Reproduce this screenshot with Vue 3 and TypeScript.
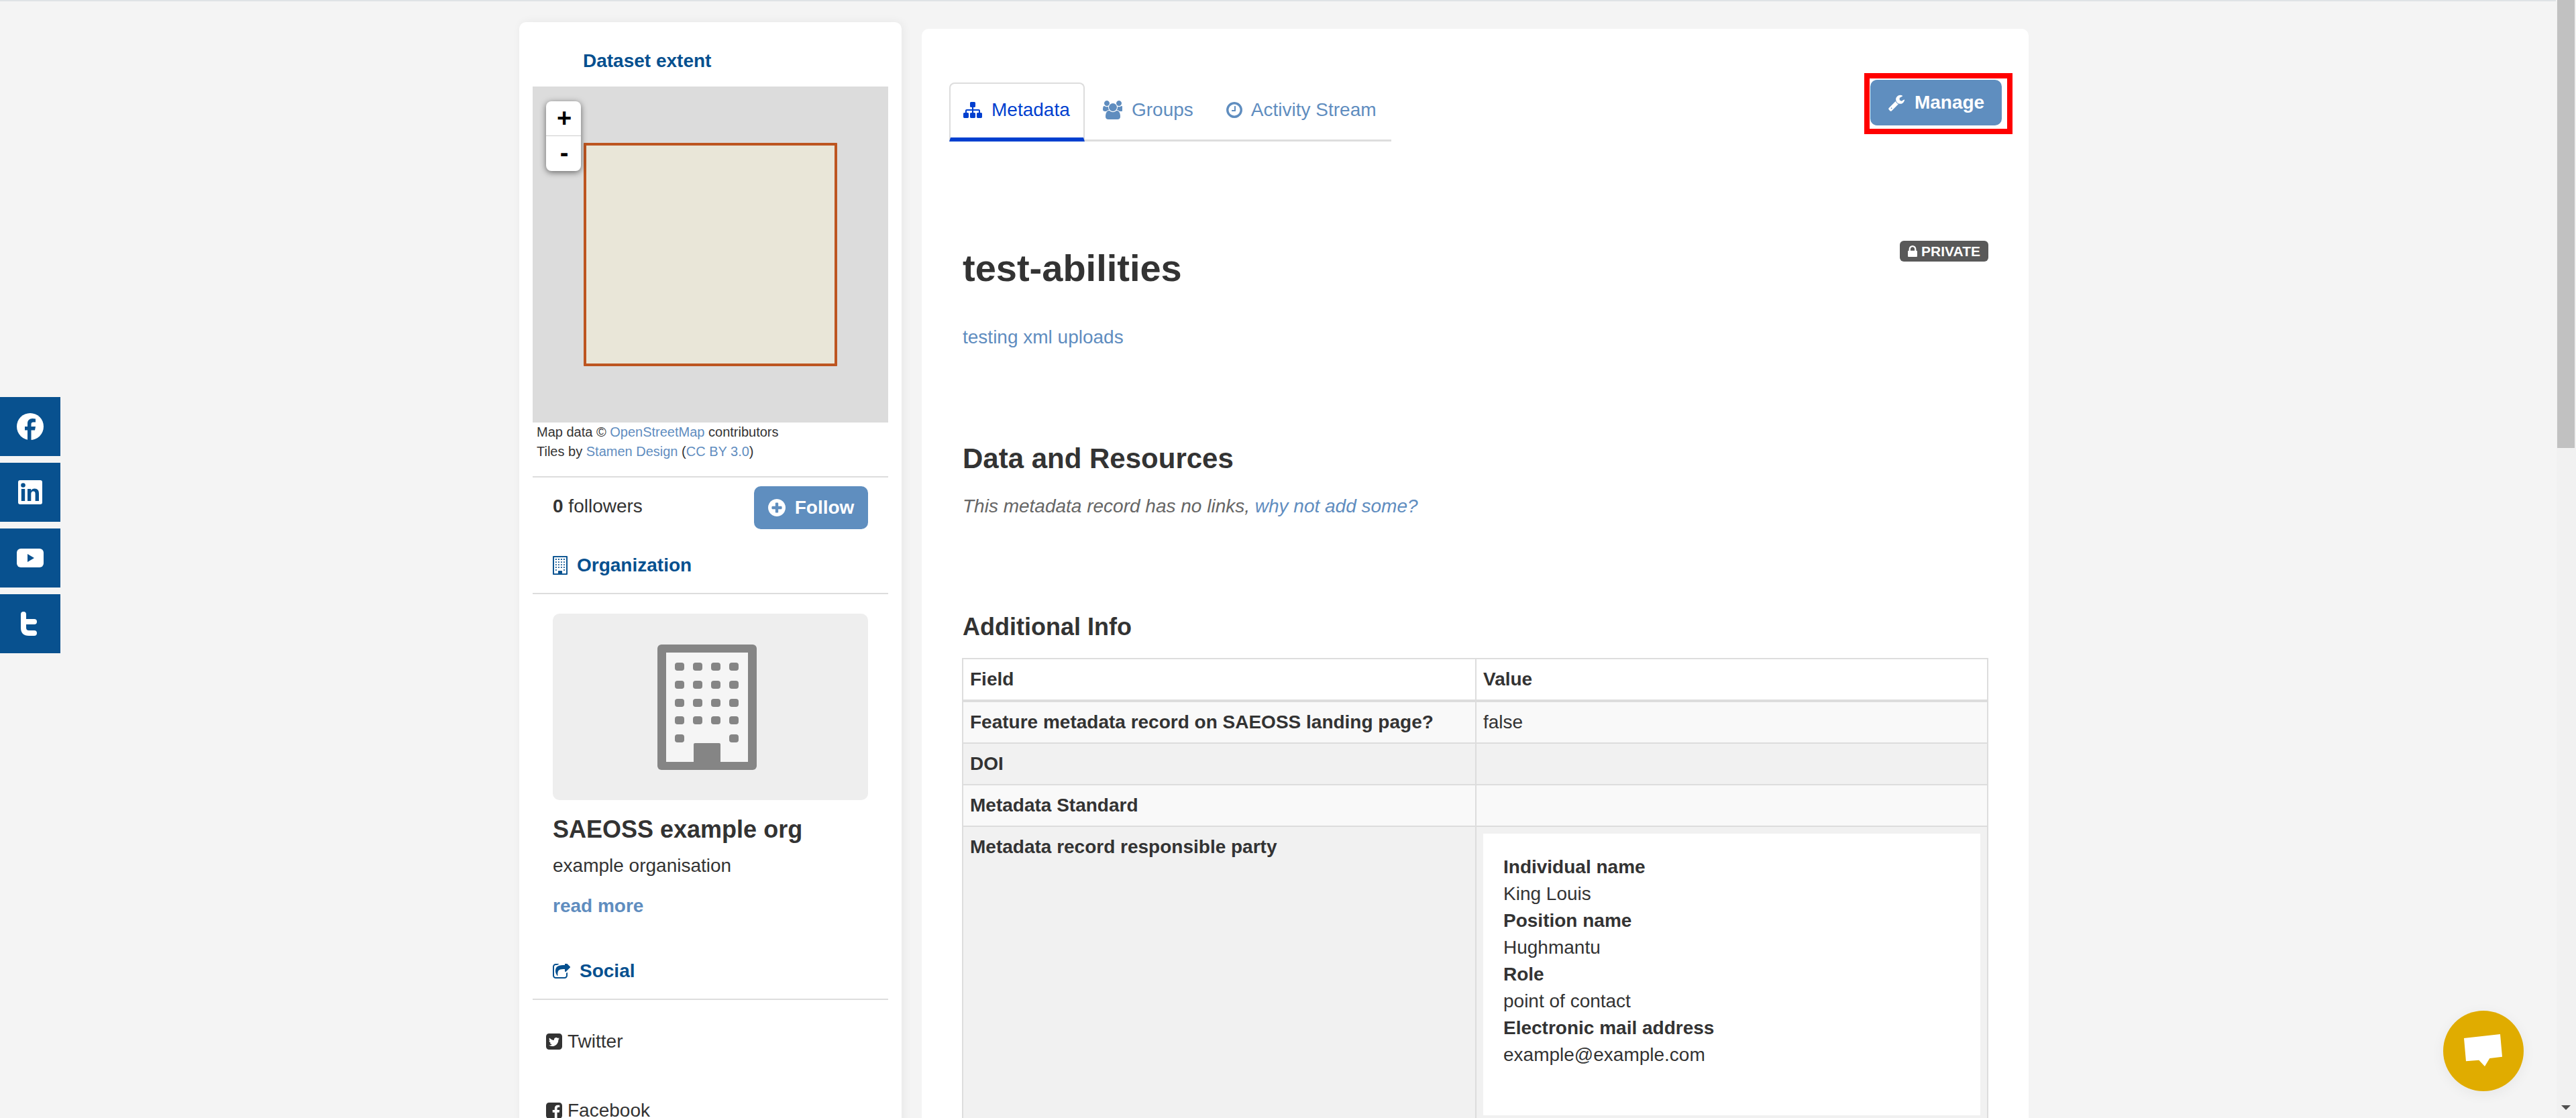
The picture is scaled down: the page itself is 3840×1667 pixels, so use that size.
<script setup lang="ts">
const ICONS: Record<string, { box: string; d: string }> = {
  sitemap: { box: '0 0 1792 1792', d: 'M1792 1248v320q0 40-28 68t-68 28h-320q-40 0-68-28t-28-68v-320q0-40 28-68t68-28h96v-192h-512v192h96q40 0 68 28t28 68v320q0 40-28 68t-68 28h-320q-40 0-68-28t-28-68v-320q0-40 28-68t68-28h96v-192h-512v192h96q40 0 68 28t28 68v320q0 40-28 68t-68 28h-320q-40 0-68-28t-28-68v-320q0-40 28-68t68-28h96v-192q0-52 38-90t90-38h512v-192h-96q-40 0-68-28t-28-68v-320q0-40 28-68t68-28h320q40 0 68 28t28 68v320q0 40-28 68t-68 28h-96v192h512q52 0 90 38t38 90v192h96q40 0 68 28t28 68z' },
  users: { box: '0 0 1920 1792', d: 'M657 896q-162 5-265 128h-134q-82 0-138-40.500t-56-118.500q0-353 124-353 6 0 43.500 21t97.500 42.500 119 21.500q67 0 133-23-5 37-5 66 0 139 81 256zm1071 637q0 120-73 189.500t-194 69.500h-874q-121 0-194-69.500t-73-189.500q0-53 3.500-103.500t14-109 26.500-108.500 43-97.500 62-81 85.500-53.500 111.500-20q10 0 43 21.500t73 48 107 48 135 21.500 135-21.500 107-48 73-48 43-21.500q61 0 111.500 20t85.500 53.500 62 81 43 97.500 26.500 108.500 14 109 3.500 103.500zm-1024-1277q0 106-75 181t-181 75-181-75-75-181 75-181 181-75 181 75 75 181zm704 384q0 159-112.500 271.500t-271.500 112.500-271.500-112.500-112.500-271.500 112.500-271.500 271.500-112.500 271.500 112.500 112.500 271.500zm576 225q0 78-56 118.500t-138 40.500h-134q-103-123-265-128 81-117 81-256 0-29-5-66 66 23 133 23 59 0 119-21.500t97.500-42.500 43.500-21q124 0 124 353zm-128-609q0 106-75 181t-181 75-181-75-75-181 75-181 181-75 181 75 75 181z' },
  clock: { box: '128 128 1536 1536', d: 'M1024 544v448q0 14-9 23t-23 9h-320q-14 0-23-9t-9-23v-64q0-14 9-23t23-9h224v-352q0-14 9-23t23-9h64q14 0 23 9t9 23zm416 352q0-148-73-273t-198-198-273-73-273 73-198 198-73 273 73 273 198 198 273 73 273-73 198-198 73-273zm224 0q0 209-103 385.500t-279.500 279.500-385.500 103-385.500-103-279.500-279.500-103-385.500 103-385.500 279.500-279.500 385.500-103 385.500 103 279.500 279.500 103 385.500z' },
  wrench: { box: '0 0 1792 1792', d: 'M448 1472q0-26-19-45t-45-19-45 19-19 45 19 45 45 19 45-19 19-45zm644-420l-682 682q-37 37-90 37-52 0-91-37l-106-108q-38-36-38-90 0-53 38-91l681-681q39 98 114.500 173.500t173.500 114.500zm634-435q0 39-23 106-47 134-164.500 217.500t-258.500 83.500q-185 0-316.500-131.500t-131.500-316.500 131.500-316.500 316.500-131.500q58 0 121.500 16.500t107.500 46.500q16 11 16 28t-16 28l-293 169v224l193 107q5-3 79-48.500t135.500-81 70.500-35.500q15 0 23.500 10t8.500 25z' },
  lock: { box: '320 128 1152 1408', d: 'M640 768h512v-192q0-106-75-181t-181-75-181 75-75 181v192zm832 96v576q0 40-28 68t-68 28h-960q-40 0-68-28t-28-68v-576q0-40 28-68t68-28h32v-192q0-184 132-316t316-132 316 132 132 316v192h32q40 0 68 28t28 68z' },
  plus: { box: '128 128 1536 1536', d: 'M1344 960v-128q0-26-19-45t-45-19h-256v-256q0-26-19-45t-45-19h-128q-26 0-45 19t-19 45v256h-256q-26 0-45 19t-19 45v128q0 26 19 45t45 19h256v256q0 26 19 45t45 19h128q26 0 45-19t19-45v-256h256q26 0 45-19t19-45zm320-64q0 209-103 385.500t-279.500 279.500-385.500 103-385.500-103-279.500-279.500-103-385.500 103-385.500 279.500-279.500 385.500-103 385.500 103 279.500 279.500 103 385.500z' },
  share: { box: '64 128 1664 1408', d: 'M1472 989v259q0 119-84.500 203.500t-203.500 84.500h-832q-119 0-203.500-84.500t-84.500-203.500v-832q0-119 84.500-203.500t203.500-84.500h255q13 0 22.500 9.500t9.500 22.500q0 27-26 32-77 26-133 60-10 4-16 4h-112q-66 0-113 47t-47 113v832q0 66 47 113t113 47h832q66 0 113-47t47-113v-214q0-19 18-29 28-13 54-37 16-16 35-8 21 9 21 29zm237-496l-384 384q-18 19-45 19-12 0-25-5-39-17-39-59v-192h-160q-323 0-438 131-119 137-74 473 3 23-20 34-8 2-12 2-16 0-26-13-10-14-21-31t-39.500-68.500-49.500-99.500-38.500-114-17.500-122q0-49 3.500-91t14-90 28-88 47-81.500 68.500-74 94.500-61.500 124.500-48.500 159.500-30.500 196.500-11h160v-192q0-42 39-59 13-5 25-5 26 0 45 19l384 384q19 19 19 45t-19 45z' },
  twitter: { box: '128 128 1536 1536', d: 'M1408 610q-56 25-121 34 68-40 93-117-65 38-134 51-61-66-153-66-87 0-148.500 61.500t-61.500 148.500q0 29 5 48-129-7-242-65t-192-155q-29 50-29 106 0 114 91 175-47-1-100-26v2q0 75 50 133.500t123 72.500q-29 8-51 8-13 0-39-4 21 63 74.500 104t121.500 42q-116 90-261 90-26 0-50-3 148 94 322 94 112 0 210-35.500t168-95 120.500-137 75-162 24.500-168.500q0-18-1-27 63-45 105-109zm256-194v960q0 119-84.500 203.500t-203.500 84.500h-960q-119 0-203.500-84.500t-84.500-203.500v-960q0-119 84.500-203.500t203.500-84.500h960q119 0 203.500 84.500t84.500 203.500z' },
  facebook: { box: '128 128 1536 1536', d: 'M1376 128q119 0 203.500 84.500t84.500 203.500v960q0 119-84.500 203.500t-203.500 84.500h-188v-595h199l30-232h-229v-148q0-56 23.500-84t91.500-28l122-1v-207q-63-9-178-9-136 0-217.500 80t-81.500 226v171h-200v232h200v595h-532q-119 0-203.500-84.500t-84.500-203.500v-960q0-119 84.500-203.500t203.500-84.500h960z' }
}

const tabs = [
  { label: 'Metadata', icon: 'sitemap', active: true },
  { label: 'Groups', icon: 'users', active: false },
  { label: 'Activity Stream', icon: 'clock', active: false }
]

const windows: { x: number; y: number }[] = []
for (const y of [33, 60, 87, 113, 140]) {
  for (const x of [33, 60, 87, 114]) {
    if (y === 140 && (x === 60 || x === 87)) continue
    windows.push({ x: x - 7, y: y - 6 })
  }
}

const party = [
  ['Individual name', 'King Louis'],
  ['Position name', 'Hughmantu'],
  ['Role', 'point of contact'],
  ['Electronic mail address', 'example@example.com']
]

const rows = [
  { field: 'Feature metadata record on SAEOSS landing page?', value: 'false' },
  { field: 'DOI', value: '' },
  { field: 'Metadata Standard', value: '' }
]
</script>

<template>
  <div class="page">
    <div class="topline"></div>

    <aside class="side">
      <h4 class="extent-title">Dataset extent</h4>
      <div class="map">
        <div class="extent"></div>
        <div class="zoom-ctl">
          <span class="zoom-btn">+</span>
          <span class="zoom-btn minus">-</span>
        </div>
      </div>
      <div class="attrib">
        <div>Map data © <a>OpenStreetMap</a> contributors</div>
        <div>Tiles by <a>Stamen Design</a> (<a>CC BY 3.0</a>)</div>
      </div>
      <hr class="rule first" />

      <div class="follow-row">
        <span class="followers"><b>0</b> followers</span>
        <button class="btn follow">
          <svg class="ico" :viewBox="ICONS.plus.box"><path :d="ICONS.plus.d" /></svg>
          Follow
        </button>
      </div>

      <h4 class="sec org">
        <svg class="org-ico" viewBox="0 0 148 187">
          <rect class="b-body" width="148" height="187" rx="6" />
          <rect class="b-inner" x="13" y="12" width="122" height="163" />
          <rect v-for="w in windows" :key="w.x + '-' + w.y" class="b-body" :x="w.x" :y="w.y" width="14" height="12" rx="4" />
          <rect class="b-body" x="54" y="147" width="40" height="30" rx="2" />
        </svg>
        Organization
      </h4>
      <hr class="rule" />

      <div class="org-box">
        <div class="logo">
          <svg class="logo-ico" viewBox="0 0 148 187">
            <rect class="b-body" width="148" height="187" rx="6" />
            <rect class="b-inner" x="13" y="12" width="122" height="163" />
            <rect v-for="w in windows" :key="w.x + '_' + w.y" class="b-body" :x="w.x" :y="w.y" width="14" height="12" rx="4" />
            <rect class="b-body" x="54" y="147" width="40" height="30" rx="2" />
          </svg>
        </div>
        <h3 class="org-name">SAEOSS example org</h3>
        <p class="org-desc">example organisation</p>
        <a class="more">read more</a>
      </div>

      <h4 class="sec social-head">
        <svg class="share-ico" :viewBox="ICONS.share.box"><path :d="ICONS.share.d" /></svg>
        Social
      </h4>
      <hr class="rule" />
      <div class="social-link tw">
        <svg class="sq" :viewBox="ICONS.twitter.box"><path :d="ICONS.twitter.d" /></svg>
        Twitter
      </div>
      <div class="social-link fb">
        <svg class="sq" :viewBox="ICONS.facebook.box"><path :d="ICONS.facebook.d" /></svg>
        Facebook
      </div>
    </aside>

    <main class="main">
      <div class="tab-row">
        <ul class="tabs">
          <li v-for="t in tabs" :key="t.label" class="tab" :class="{ active: t.active }">
            <svg class="tab-ico" :viewBox="ICONS[t.icon].box"><path :d="ICONS[t.icon].d" /></svg>
            {{ t.label }}
          </li>
        </ul>
        <div class="highlight">
          <button class="btn manage">
            <svg class="ico" :viewBox="ICONS.wrench.box"><path :d="ICONS.wrench.d" /></svg>
            Manage
          </button>
        </div>
      </div>

      <article class="article">
        <div class="title-row">
          <h1 class="title">test-abilities</h1>
          <span class="badge">
            <svg class="lock" :viewBox="ICONS.lock.box"><path :d="ICONS.lock.d" /></svg>
            PRIVATE
          </span>
        </div>
        <p class="notes"><a>testing xml uploads</a></p>

        <h3 class="h-res">Data and Resources</h3>
        <p class="empty">This metadata record has no links, <a>why not add some?</a></p>

        <h3 class="h-info">Additional Info</h3>
        <table class="info">
          <thead>
            <tr><th class="col-a">Field</th><th>Value</th></tr>
          </thead>
          <tbody>
            <tr v-for="r in rows" :key="r.field">
              <th>{{ r.field }}</th>
              <td>{{ r.value }}</td>
            </tr>
            <tr>
              <th>Metadata record responsible party</th>
              <td>
                <div class="party">
                  <template v-for="p in party" :key="p[0]">
                    <b>{{ p[0] }}</b>
                    <span>{{ p[1] }}</span>
                  </template>
                </div>
              </td>
            </tr>
          </tbody>
        </table>
      </article>
    </main>

    <nav class="share-bar">
      <div class="share-item">
        <svg width="40" height="40" viewBox="0 0 40 40">
          <circle cx="20" cy="20" r="20" fill="#fff" />
          <path d="M21.5 40V25.500H27L28 20H21.500V16.500C21.500 14.500 22.500 13.500 24.500 13.500H28V8.500C26.500 8.200 25 8 23.500 8C19 8 16 10.800 16 15.500V20H12V25.500H16V40z" fill="#08518f" />
        </svg>
      </div>
      <div class="share-item">
        <svg width="36" height="36" viewBox="0 0 36 36">
          <rect width="36" height="36" rx="3" fill="#fff" />
          <circle cx="7.500" cy="7.500" r="3.300" fill="#08518f" />
          <rect x="4.800" y="13" width="5.400" height="18" fill="#08518f" />
          <path d="M14 13h5.200v2.600c1-1.800 3-3 5.400-3 4.500 0 6.400 2.800 6.400 7.400V31h-5.400V20.500c0-2.600-.8-4-3-4-2.400 0-3.300 1.800-3.300 4V31H14z" fill="#08518f" />
        </svg>
      </div>
      <div class="share-item">
        <svg width="40" height="28" viewBox="0 0 40 28">
          <rect width="40" height="28" rx="6" fill="#fff" />
          <path d="M16 8l10 6-10 6z" fill="#08518f" />
        </svg>
      </div>
      <div class="share-item">
        <svg width="28" height="36" viewBox="0 0 28 36" fill="none" stroke="#fff" stroke-width="8" stroke-linecap="round">
          <path d="M4 4V24Q4 32 12 32H20" />
          <path d="M4 15H20" />
        </svg>
      </div>
    </nav>

    <div class="chat">
      <svg width="60" height="50" viewBox="0 0 60 50">
        <path d="M1 6L55 0L58 33.700L39.300 36L32 48L23.300 38.700L4 40.300z" fill="#fff" />
      </svg>
    </div>

    <div class="scrollbar">
      <div class="thumb"></div>
      <div class="arrow"></div>
    </div>
  </div>
</template>

<style>
html,
body {
  margin: 0;
  overflow: hidden;
  background: #f4f4f4;
}
</style>

<style scoped>
.page {
  display: flex;
  align-items: flex-start;
  gap: 30px;
  height: 1667px;
  overflow: hidden;
  padding-left: 774px;
  box-sizing: border-box;
  background: #f4f4f4;
  font-family: "Liberation Sans", Arial, sans-serif;
  font-size: 28px;
  line-height: 40px;
  color: #333;
}
a {
  color: #5f8dbf;
}
h1, h3, h4, p, ul {
  margin: 0;
  padding: 0;
}
.topline {
  position: fixed;
  left: 0;
  top: 0;
  width: 3810px;
  height: 2px;
  background: #dfe3e6;
}

/* left column */
.side {
  width: 570px;
  flex: none;
  margin-top: 33px;
  padding: 0 20px;
  box-sizing: border-box;
  height: 1700px;
  background: #fff;
  border-radius: 10px;
  box-shadow: 2px 0 14px rgba(0, 0, 0, 0.06);
}
.extent-title {
  padding: 39px 0 19px 75px;
  font-size: 28px;
  line-height: 38px;
  color: #05508f;
}
.map {
  position: relative;
  height: 501px;
  background: #dcdcdc;
}
.extent {
  position: absolute;
  left: 76px;
  top: 84px;
  width: 378px;
  height: 333px;
  box-sizing: border-box;
  border: 4px solid #bd5520;
  border-radius: 1px;
  background: #e9e6d8;
}
.zoom-ctl {
  position: absolute;
  left: 20px;
  top: 22px;
  width: 52px;
  border-radius: 8px;
  background: #fff;
  box-shadow: 0 2px 10px rgba(0, 0, 0, 0.55);
}
.zoom-btn {
  display: block;
  height: 51px;
  padding-left: 2px;
  font-size: 38px;
  font-weight: 700;
  line-height: 50px;
  text-align: center;
  color: #000;
  border-bottom: 1px solid #ccc;
}
.zoom-btn.minus {
  height: 52px;
  border-bottom: 0;
}
.attrib {
  padding-left: 6px;
  font-size: 20px;
  line-height: 29px;
}
.rule {
  margin: 0;
  border: 0;
  border-top: 2px solid #ddd;
}
.rule.first {
  margin-top: 22px;
}
.follow-row {
  display: flex;
  align-items: flex-start;
  justify-content: space-between;
  padding: 13px 30px 0;
}
.followers {
  margin-top: 10px;
}
.btn {
  display: inline-flex;
  align-items: center;
  justify-content: center;
  padding: 0;
  border: 0;
  border-radius: 10px;
  background: #5f8ebf;
  color: #fff;
  font-family: inherit;
  font-weight: 700;
}
.ico {
  width: 26px;
  height: 26px;
  fill: #fff;
}
.follow {
  width: 170px;
  height: 64px;
  gap: 14px;
  font-size: 28px;
}
.sec {
  font-size: 28px;
  line-height: 40px;
  color: #05508f;
  margin-left: 30px;
  display: flex;
  align-items: center;
}
.org {
  margin-top: 34px;
  margin-bottom: 21px;
  gap: 14px;
}
.org-ico {
  width: 22px;
  height: 28px;
}
.org-ico .b-body {
  fill: #05508f;
}
.b-body {
  fill: #858585;
}
.b-inner {
  fill: #f5f5f5;
}
.org-ico .b-inner {
  fill: #fff;
}
.org-box {
  margin: 29px 30px 0;
}
.logo {
  display: flex;
  align-items: center;
  height: 278px;
  padding-left: 156px;
  box-sizing: border-box;
  border-radius: 10px;
  background: #eee;
}
.logo-ico {
  width: 148px;
  height: 187px;
}
.org-name {
  margin-top: 22px;
  font-size: 36px;
  line-height: 44px;
}
.org-desc {
  margin-top: 12px;
}
.more {
  display: block;
  margin-top: 20px;
  font-weight: 700;
}
.social-head {
  margin-top: 57px;
  margin-bottom: 21px;
  gap: 14px;
}
.share-ico {
  width: 26px;
  height: 22px;
  fill: #05508f;
}
.social-link {
  display: flex;
  align-items: center;
  gap: 8px;
  margin-left: 20px;
}
.tw {
  margin-top: 42px;
}
.fb {
  margin-top: 63px;
}
.sq {
  width: 24px;
  height: 24px;
  fill: #333;
}

/* main card */
.main {
  width: 1650px;
  flex: none;
  margin-top: 43px;
  padding: 66px 24px 0 41px;
  box-sizing: border-box;
  height: 1700px;
  background: #fff;
  border-radius: 10px;
}
.tab-row {
  display: flex;
  justify-content: space-between;
  align-items: flex-start;
}
.tabs {
  display: flex;
  list-style: none;
  width: 659px;
  height: 88px;
  margin-top: 14px;
  box-sizing: border-box;
  border-bottom: 3px solid #ddd;
}
.tab {
  display: flex;
  flex: none;
  align-items: center;
  height: 85px;
  padding: 0 23px 4px 26px;
  box-sizing: border-box;
  gap: 14px;
  white-space: nowrap;
  color: #5f8dbf;
  fill: #5f8dbf;
}
.tab.active {
  width: 202px;
  height: 88px;
  border: 2px solid #ddd;
  border-bottom: 6px solid #003fcf;
  border-radius: 8px 8px 0 0;
  padding: 0 0 2px 19px;
  color: #003fcf;
  fill: #003fcf;
}
.tab-ico {
  width: 28px;
  height: 28px;
  flex: none;
}
.tab:nth-child(2) .tab-ico {
  width: 30px;
}
.tab:nth-child(3) {
  padding-right: 0;
  gap: 13px;
}
.tab:nth-child(3) .tab-ico {
  width: 24px;
  height: 24px;
}
.highlight {
  display: flex;
  box-sizing: border-box;
  width: 221px;
  height: 91px;
  padding: 2px 0 0 1px;
  border: 8px solid #f00;
}
.manage {
  width: 196px;
  height: 68px;
  gap: 14px;
  font-size: 28px;
}
.article {
  padding: 0 36px 0 20px;
}
.title-row {
  display: flex;
  justify-content: space-between;
  align-items: flex-start;
  margin-top: 148px;
}
.title {
  margin-top: 11px;
  font-size: 56px;
  line-height: 60px;
}
.badge {
  display: flex;
  align-items: center;
  gap: 6px;
  height: 31px;
  padding: 0 12px;
  border-radius: 6px;
  background: #595959;
  color: #fff;
  font-size: 21px;
  font-weight: 700;
}
.lock {
  width: 14px;
  height: 17px;
  fill: #fff;
}
.notes {
  margin-top: 53px;
}
.h-res {
  margin-top: 137px;
  font-size: 42px;
  line-height: 48px;
}
.empty {
  margin-top: 27px;
  font-style: italic;
  color: #666;
}
.h-info {
  margin-top: 138px;
  font-size: 36px;
  line-height: 44px;
}
.info {
  width: 1530px;
  margin-top: 24px;
  border-collapse: collapse;
  table-layout: fixed;
  margin-left: -1px;
}
.col-a {
  width: 743px;
}
.info th,
.info td {
  border: 2px solid #ddd;
  padding: 10px;
  text-align: left;
  vertical-align: top;
  height: 40px;
}
.info thead th {
  border-bottom-width: 4px;
}
.info tbody tr:nth-child(odd) > * {
  background: #f9f9f9;
}
.info tbody tr:nth-child(even) > * {
  background: #f1f1f1;
}
.party {
  display: flex;
  flex-direction: column;
  height: 420px;
  box-sizing: border-box;
  padding: 30px 30px 70px;
  background: #fff;
}

/* fixed overlays */
.share-bar {
  position: fixed;
  left: 0;
  top: 592px;
  display: flex;
  flex-direction: column;
  gap: 10px;
}
.share-item {
  display: flex;
  align-items: center;
  justify-content: center;
  width: 90px;
  height: 88px;
  background: #08518f;
}
.chat {
  position: fixed;
  left: 3642px;
  top: 1507px;
  display: flex;
  align-items: center;
  justify-content: center;
  width: 120px;
  height: 120px;
  border-radius: 50%;
  background: #e0ac00;
  box-shadow: 0 4px 20px rgba(0, 0, 0, 0.06);
}
.scrollbar {
  position: fixed;
  right: 0;
  top: 0;
  width: 29px;
  height: 1667px;
  background: #f1f1f1;
}
.thumb {
  width: 26px;
  height: 668px;
  margin-left: 1px;
  background: #c1c1c1;
}
.arrow {
  position: absolute;
  left: 7px;
  top: 1648px;
  border-left: 7px solid transparent;
  border-right: 7px solid transparent;
  border-top: 7px solid #505050;
}
</style>
